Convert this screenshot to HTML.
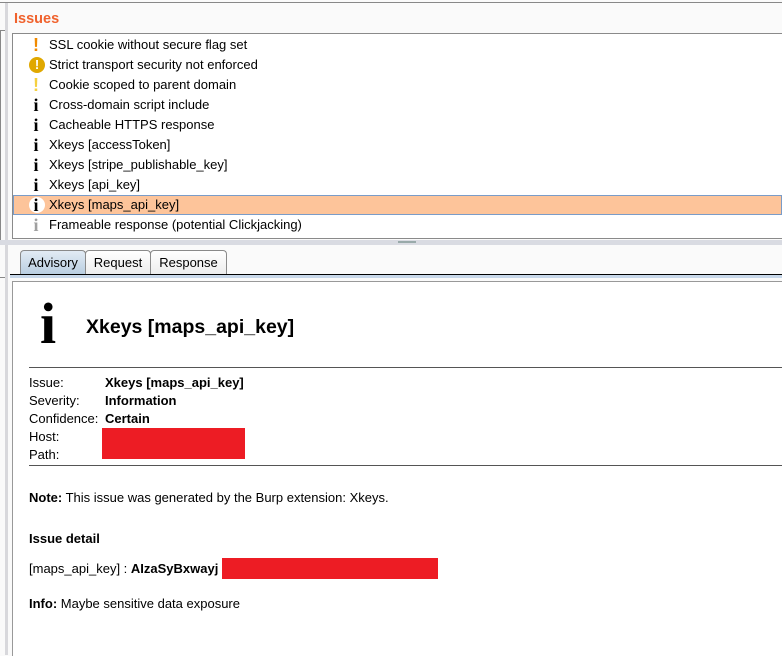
<!DOCTYPE html>
<html><head><style>
body{margin:0;width:782px;height:655px;background:#fafafa;position:relative;overflow:hidden;font-family:"Liberation Sans",Arial,sans-serif;font-size:13px;color:#000}
.abs{position:absolute}
.row{position:absolute;left:13px;width:769px;height:20px;line-height:20px}
.row .t{position:absolute;left:36px;top:0;font-size:13px}
.ic{position:absolute;left:16px;top:0;width:14px;text-align:center;font-family:"Liberation Serif",serif;font-weight:bold;font-size:18px}
.tab{position:absolute;top:250px;height:24px;line-height:24px;border:1px solid #8a8a8a;border-bottom:none;border-radius:4px 4px 0 0;background:linear-gradient(#fff,#ececec);font-size:13px;text-align:center}
.lbl{position:absolute;left:29px;font-size:13px}
.val{position:absolute;left:105px;font-size:13px;font-weight:bold}
</style></head><body>
<div class="abs" style="left:0;top:2px;width:782px;height:1px;background:#888"></div>
<div class="abs" style="left:5px;top:3px;width:3px;height:652px;background:#d8d8dc"></div>
<div class="abs" style="left:0;top:30px;width:5px;height:1px;background:#888"></div>
<div class="abs" style="left:0;top:30px;width:1px;height:210px;background:#888"></div>
<div class="abs" style="left:14px;top:11px;color:#f0622d;font-weight:bold;font-size:14.5px">Issues</div>
<div class="abs" style="left:12px;top:33px;width:770px;height:204px;background:#fff;border:1px solid #8a8a8a;border-right:none"></div>
<div class="row" style="top:35px"><span class="ic" style="color:#f08a00;font-family:'Liberation Sans'">!</span><span class="t">SSL cookie without secure flag set</span></div>
<div class="row" style="top:55px"><span class="abs" style="left:16px;top:2px;width:16px;height:16px;border-radius:50%;background:#e0a800;color:#fff;text-align:center;line-height:16px;font-weight:bold;font-size:13px">!</span><span class="t">Strict transport security not enforced</span></div>
<div class="row" style="top:75px"><span class="ic" style="color:#f5d040;font-family:'Liberation Sans'">!</span><span class="t">Cookie scoped to parent domain</span></div>
<div class="row" style="top:95px"><span class="ic">i</span><span class="t">Cross-domain script include</span></div>
<div class="row" style="top:115px"><span class="ic">i</span><span class="t">Cacheable HTTPS response</span></div>
<div class="row" style="top:135px"><span class="ic">i</span><span class="t">Xkeys [accessToken]</span></div>
<div class="row" style="top:155px"><span class="ic">i</span><span class="t">Xkeys [stripe_publishable_key]</span></div>
<div class="row" style="top:175px"><span class="ic">i</span><span class="t">Xkeys [api_key]</span></div>
<div class="row" style="top:195px;background:#fdc49a;box-shadow:inset 0 0 0 1px #7a9cc8"><span class="abs" style="left:16px;top:2px;width:16px;height:16px;border-radius:50%;background:#fff"></span><span class="ic">i</span><span class="t">Xkeys [maps_api_key]</span></div>
<div class="row" style="top:215px"><span class="ic" style="color:#a0a0a0">i</span><span class="t">Frameable response (potential Clickjacking)</span></div>
<div class="abs" style="left:0;top:240px;width:782px;height:5px;background:#d9dbe2"></div>
<div class="abs" style="left:398px;top:241px;width:18px;height:2px;background:#9aa"></div>
<div class="tab" style="left:20px;width:64px;background:linear-gradient(#e2ebf4,#b8cde0)">Advisory</div>
<div class="tab" style="left:85px;width:64px">Request</div>
<div class="tab" style="left:150px;width:75px">Response</div>
<div class="abs" style="left:10px;top:274px;width:772px;height:1px;background:#000"></div>
<div class="abs" style="left:10px;top:275px;width:772px;height:3px;background:#c8d8ea"></div>
<div class="abs" style="left:0;top:277px;width:5px;height:1px;background:#888"></div>
<div class="abs" style="left:12px;top:281px;width:770px;height:374px;background:#fff;border-top:1px solid #999;border-left:1px solid #999"></div>
<div class="abs" style="left:40px;top:296px;font-family:'Liberation Serif',serif;font-weight:bold;font-size:58px;line-height:56px">i</div>
<div class="abs" style="left:86px;top:316px;font-weight:bold;font-size:19.5px">Xkeys [maps_api_key]</div>
<div class="abs" style="left:29px;top:367px;width:753px;height:1px;background:#555"></div>
<div class="lbl" style="top:375px">Issue:</div><div class="val" style="top:375px">Xkeys [maps_api_key]</div>
<div class="lbl" style="top:393px">Severity:</div><div class="val" style="top:393px">Information</div>
<div class="lbl" style="top:411px">Confidence:</div><div class="val" style="top:411px">Certain</div>
<div class="lbl" style="top:429px">Host:</div>
<div class="lbl" style="top:447px">Path:</div>
<div class="abs" style="left:102px;top:428px;width:143px;height:31px;background:#ed1c24"></div>
<div class="abs" style="left:29px;top:465px;width:753px;height:1px;background:#555"></div>
<div class="lbl" style="top:490px"><b>Note:</b> This issue was generated by the Burp extension: Xkeys.</div>
<div class="lbl" style="top:531px;font-weight:bold">Issue detail</div>
<div class="lbl" style="top:561px">[maps_api_key] : <b>AIzaSyBxwayj</b></div>
<div class="abs" style="left:222px;top:558px;width:216px;height:21px;background:#ed1c24"></div>
<div class="lbl" style="top:596px"><b>Info:</b> Maybe sensitive data exposure</div>
</body></html>
